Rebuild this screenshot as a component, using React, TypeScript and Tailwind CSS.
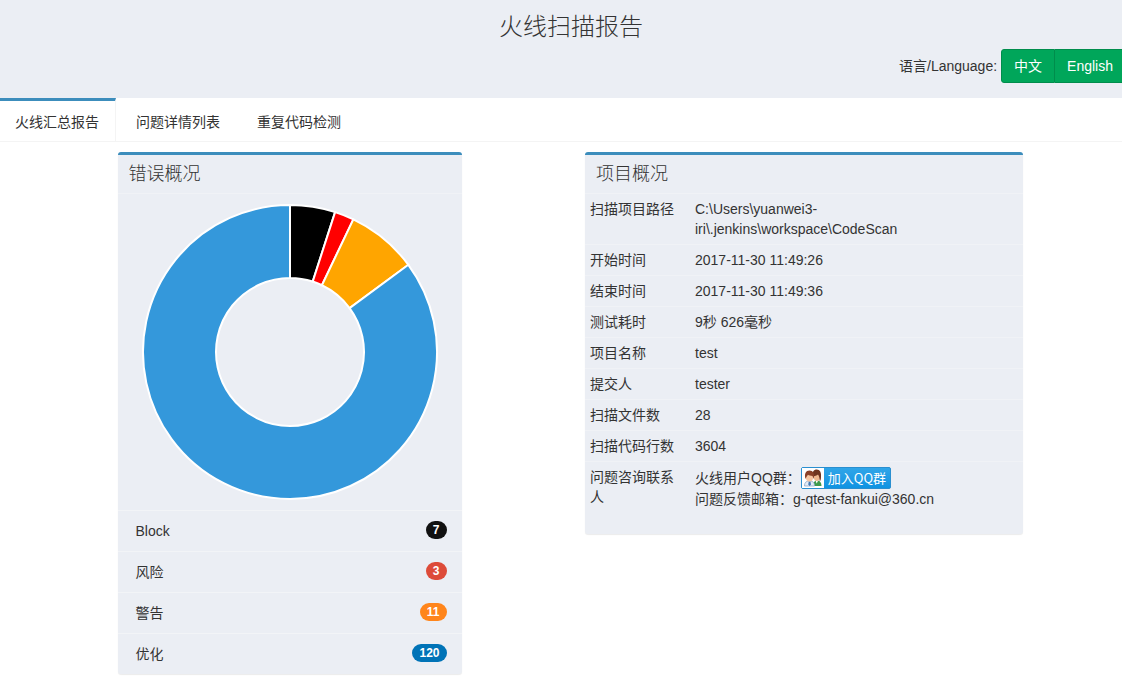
import { useState } from "react";
import type { ReactNode } from "react";
import clsx from "clsx";

interface Level {
  label: string;
  count: number;
  fill: string;
  badge: string;
}

const LEVELS: Level[] = [
  { label: "Block", count: 7, fill: "#000000", badge: "bg-[#111111]" },
  { label: "风险", count: 3, fill: "#ff0000", badge: "bg-[#dd4b39]" },
  { label: "警告", count: 11, fill: "#ffa500", badge: "bg-[#ff851b]" },
  { label: "优化", count: 120, fill: "#3498db", badge: "bg-[#0073b7]" },
];

const TABS = ["火线汇总报告", "问题详情列表", "重复代码检测"];

const PROJECT: [string, string][] = [
  ["扫描项目路径", "C:\\Users\\yuanwei3-iri\\.jenkins\\workspace\\CodeScan"],
  ["开始时间", "2017-11-30 11:49:26"],
  ["结束时间", "2017-11-30 11:49:36"],
  ["测试耗时", "9秒 626毫秒"],
  ["项目名称", "test"],
  ["提交人", "tester"],
  ["扫描文件数", "28"],
  ["扫描代码行数", "3604"],
];

const OUTER = 147;
const INNER = 74;

function point(radius: number, turn: number) {
  const a = turn * Math.PI * 2;
  return `${(148 + radius * Math.sin(a)).toFixed(2)} ${(148 - radius * Math.cos(a)).toFixed(2)}`;
}

function slicePath(from: number, to: number) {
  const large = to - from > 0.5 ? 1 : 0;
  return [
    `M${point(OUTER, from)}`,
    `A${OUTER} ${OUTER} 0 ${large} 1 ${point(OUTER, to)}`,
    `L${point(INNER, to)}`,
    `A${INNER} ${INNER} 0 ${large} 0 ${point(INNER, from)}`,
    "Z",
  ].join(" ");
}

function Doughnut({ levels }: { levels: Level[] }) {
  const total = levels.reduce((sum, l) => sum + l.count, 0);
  let seen = 0;

  return (
    <svg viewBox="0 0 296 296" className="w-[296px] max-w-full" role="img" aria-label="错误概况">
      {levels.map((l) => {
        const from = seen / total;
        seen += l.count;
        return (
          <path key={l.label} d={slicePath(from, seen / total)} fill={l.fill} stroke="#fff" strokeWidth="2" />
        );
      })}
    </svg>
  );
}

function Box({ title, children }: { title: string; children: ReactNode }) {
  return (
    <section className="rounded-[3px] border-t-[3px] border-[#3c8dbc] bg-[#ebeef4] shadow-[0_1px_1px_rgba(0,0,0,0.08)]">
      <h2 className="px-[11px] py-[9px] text-[18px] leading-5 font-light">{title}</h2>
      {children}
    </section>
  );
}

/* Two people, as on the QQ group badge */
function GroupIcon() {
  return (
    <svg viewBox="0 0 22 20" className="h-5 w-[22px] shrink-0 bg-white">
      <path d="M11 18c0-3.500 1.500-5.500 4-5.500 3 0 4.500 2 4.500 5.500z" fill="#3f9a4c" />
      <path d="M13.500 12.500l1.200 3 1.500-3z" fill="#fff" />
      <ellipse cx="14.800" cy="9" rx="3" ry="4" fill="#efb890" />
      <path d="M10.500 9C9.500 4 12 1.500 14.700 1.500c3.300 0 4.800 3 4.300 7.500 0 2-.5 3.500-1.200 4.500-.3-3-.3-5-1.800-7-1 1-3.500 1.500-5.500 2.500z" fill="#6f3520" />
      <path d="M2.500 18c0-3.500 1.500-5 5-5s5 1.500 5 5z" fill="#e3ebf5" stroke="#7f9fc4" strokeWidth=".7" />
      <path d="M6.800 13.500h1.600l.6 3L7.600 18l-1.400-1.500z" fill="#4179b5" />
      <ellipse cx="7.500" cy="9.500" rx="3.600" ry="4" fill="#f6c6a2" />
      <path d="M3.500 11C2 5.500 4 2.500 7.500 2.500S13 5.500 11.700 11L10.500 8c-2 0-3.500-.5-4.500-1.200C5.300 8 4.500 8.500 3.500 11z" fill="#8a4128" />
    </svg>
  );
}

export default function App() {
  const [tab, setTab] = useState(0);

  return (
    <div className="min-h-screen overflow-x-hidden bg-white font-['Liberation_Sans','Noto_Sans_CJK_SC',sans-serif] text-[14px] leading-5 text-[#333]">
      <header className="bg-[#ebeef4] pt-[13px] pb-[15px]">
        <h1 className="pl-5 text-center text-[24px] leading-7 font-light">火线扫描报告</h1>
        <div className="mt-2 flex items-center justify-end gap-1">
          <span>语言/Language:</span>
          <div className="flex text-white">
            <button className="h-[34px] rounded-l-[3px] border border-[#008d4c] bg-[#00a65a] px-3">中文</button>
            <button className="h-[34px] border-y border-[#008d4c] bg-[#00a65a] pr-[9px] pl-3">English</button>
          </div>
        </div>
      </header>

      <nav className="border-b border-[#f4f4f4]">
        <ul className="flex gap-[5px]">
          {TABS.map((name, i) => (
            <li key={name}>
              <a
                href={`#tab-${i}`}
                onClick={() => setTab(i)}
                className={clsx(
                  "block border-t-[3px] border-r pt-[11px] pr-4 pb-[9px] pl-[15px]",
                  i === tab ? "border-t-[#3c8dbc] border-r-[#f4f4f4]" : "border-transparent"
                )}
              >
                {name}
              </a>
            </li>
          ))}
        </ul>
      </nav>

      <main className="grid grid-cols-12 items-start pt-2.5 pb-2">
        <div className="col-span-4 col-start-2 pr-1.5 pl-6">
          <Box title="错误概况">
            <div className="flex justify-center border-t border-[#f0f2f6] py-2.5">
              <Doughnut levels={LEVELS} />
            </div>
            <ul>
              {LEVELS.map((l) => (
                <li key={l.label} className="flex items-start justify-between border-t border-[#f2f4f7] py-2.5 pr-[15px] pl-[18px]">
                  <span>{l.label}</span>
                  <span className={clsx("rounded-[10px] px-[7px] py-[3px] text-[12px] leading-3 font-bold text-white", l.badge)}>
                    {l.count}
                  </span>
                </li>
              ))}
            </ul>
          </Box>
        </div>

        <div className="col-span-5 col-start-7 pr-1.5 pl-6">
          <Box title="项目概况">
            <table className="w-full table-fixed border-collapse text-left align-top">
              <tbody>
                {PROJECT.map(([name, value]) => (
                  <tr key={name} className="border-t border-[#f0f2f6]">
                    <th scope="row" className="w-[105px] p-[5px] align-top font-normal">{name}</th>
                    <td className="p-[5px] align-top">{value}</td>
                  </tr>
                ))}
                <tr className="border-t border-[#f0f2f6]">
                  <th scope="row" className="w-[105px] p-[5px] align-top font-normal">问题咨询联系人</th>
                  <td className="p-[5px] pb-[25px] align-top">
                    <div className="flex items-center">
                      <span>火线用户QQ群：</span>
                      <a
                        href="#qq"
                        className="flex h-[22px] w-[90px] items-center rounded-[2px] border border-[#2a8fd0] bg-linear-to-b from-[#2fa5e8] to-[#0e93e2] font-['Noto_Sans_CJK_SC',sans-serif] text-[13px] text-white"
                      >
                        <GroupIcon />
                        <span className="flex-1 pl-1 whitespace-nowrap">加入QQ群</span>
                      </a>
                    </div>
                    <div>问题反馈邮箱：g-qtest-fankui@360.cn</div>
                  </td>
                </tr>
              </tbody>
            </table>
          </Box>
        </div>
      </main>
    </div>
  );
}
